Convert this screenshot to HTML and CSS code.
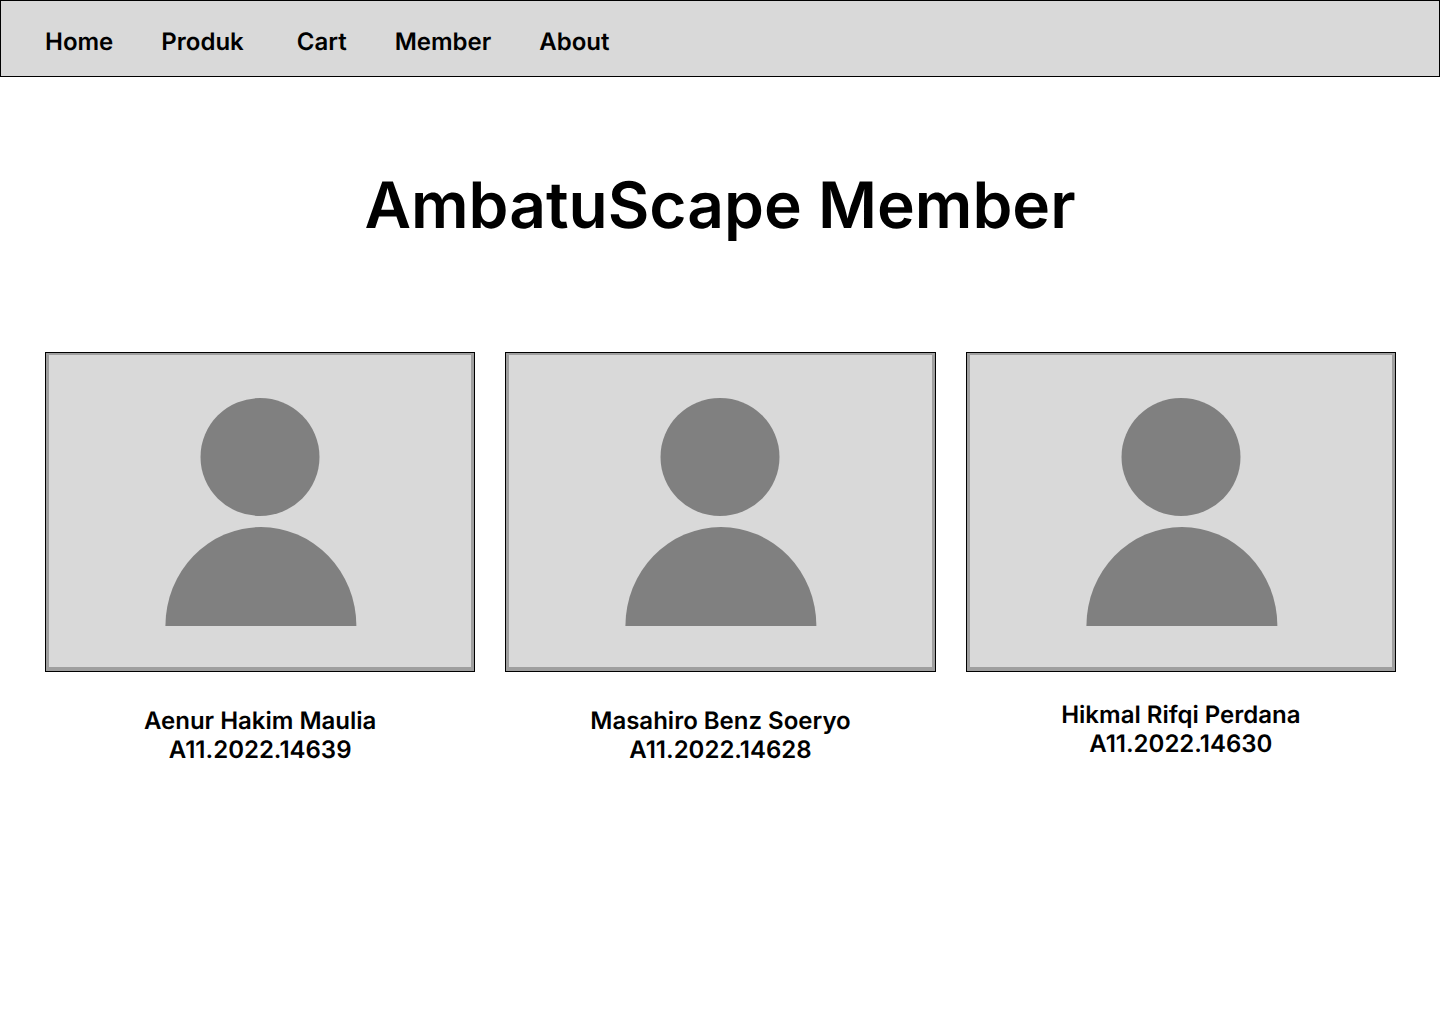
FILE: index.html
```html
<!DOCTYPE html>
<html lang="id">
<head>
<meta charset="utf-8">
<meta name="viewport" content="width=device-width, initial-scale=1">
<title>AmbatuScape Member</title>
<link rel="stylesheet" href="styles.css">
</head>
<body>
<nav class="navbar" aria-label="Main">
  <a href="#">Home</a>
  <a class="nav-wide" href="#">Produk</a>
  <a href="#">Cart</a>
  <a href="#">Member</a>
  <a href="#">About</a>
</nav>
<main>
  <h1 class="title">AmbatuScape Member</h1>
  <div class="members">
    <figure class="member">
      <div class="photo">
        <svg class="avatar" viewBox="0 0 194 231" aria-hidden="true"><ellipse cx="97" cy="60" rx="59.5" ry="59"/><path d="M2.400 229A95.500 99 0 0 1 193.400 229Z"/></svg>
      </div>
      <figcaption class="caption">Aenur Hakim Maulia<br>A11.2022.14639</figcaption>
    </figure>
    <figure class="member">
      <div class="photo">
        <svg class="avatar" viewBox="0 0 194 231" aria-hidden="true"><ellipse cx="97" cy="60" rx="59.5" ry="59"/><path d="M2.400 229A95.500 99 0 0 1 193.400 229Z"/></svg>
      </div>
      <figcaption class="caption">Masahiro Benz Soeryo<br>A11.2022.14628</figcaption>
    </figure>
    <figure class="member">
      <div class="photo">
        <svg class="avatar" viewBox="0 0 194 231" aria-hidden="true"><ellipse cx="97" cy="60" rx="59.5" ry="59"/><path d="M2.400 229A95.500 99 0 0 1 193.400 229Z"/></svg>
      </div>
      <figcaption class="caption caption-raised">Hikmal Rifqi Perdana<br>A11.2022.14630</figcaption>
    </figure>
  </div>
</main>
</body>
</html>
```
FILE: styles.css
```css
* {
  box-sizing: border-box;
}

body {
  margin: 0;
  background: #fff;
  color: #000;
  font-family: Inter, sans-serif;
  font-weight: 600;
  text-rendering: geometricPrecision;
}

.navbar {
  display: flex;
  gap: 48px;
  padding: 26px 44px 20px;
  border: 1px solid #000;
  background: #d9d9d9;
  font-size: 24px;
  line-height: 29px;
}

.navbar a {
  color: inherit;
  text-decoration: none;
}

.nav-wide {
  padding-right: 5px;
}

.title {
  margin: 90px 0 108px;
  font-size: 64px;
  font-weight: 600;
  line-height: 77px;
  text-align: center;
}

.members {
  display: grid;
  grid-template-columns: repeat(3, 1fr);
  gap: 30px;
  padding: 0 44px 0 45px;
}

.member {
  margin: 0;
}

/* The grey frame sits inside a thin black edge. */
.photo {
  display: flex;
  justify-content: center;
  padding: 42px 0 39px;
  border: solid #9f9f9f;
  border-width: 3px 4px 5px;
  outline: 1px solid #000;
  outline-offset: -1px;
  background: #d9d9d9;
}

.avatar {
  width: 194px;
  height: 231px;
  fill: #808080;
}

.caption {
  padding-top: 34px;
  font-size: 24px;
  line-height: 29px;
  text-align: center;
}

.caption-raised {
  padding-top: 28px;
}
```
